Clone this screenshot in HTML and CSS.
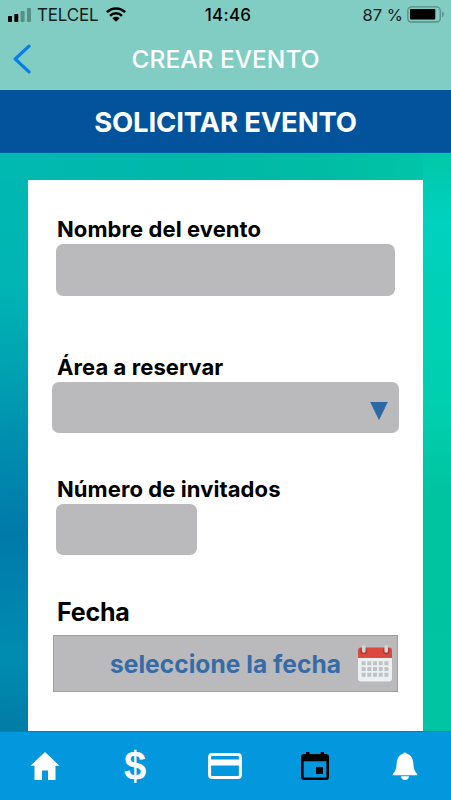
FILE: index.html
```html
<!DOCTYPE html>
<html lang="es">
<head>
<meta charset="utf-8">
<meta name="viewport" content="width=device-width, initial-scale=1">
<title>Crear evento</title>
<link rel="stylesheet" href="styles.css">
</head>
<body>
<div class="app">
  <header class="top">
    <div class="status">
      <div class="status-left">
        <svg class="signal" width="24" height="14" viewBox="0 0 24 14"><rect x="0" y="8" width="4" height="6" rx=".8"/><rect x="6.3" y="6" width="4" height="8" rx=".8"/><g fill="#559087"><rect x="12.6" y="3" width="4" height="11" rx=".8"/><rect x="19" y="0" width="4" height="14" rx=".8"/></g></svg>
        <span class="carrier">TELCEL</span>
        <svg class="wifi" width="20" height="15" viewBox="0 0 20 15"><g fill="none" stroke="#000" stroke-width="2.5"><path d="M.9 5.2a13 13 0 0 1 18.200 0"/><path d="M4 8.800a8.500 8.500 0 0 1 12 0"/></g><path d="M6.400 11.300a5.100 5.100 0 0 1 7.200 0L10 14.800z"/></svg>
      </div>
      <span class="clock">14:46</span>
      <div class="status-right">
        <span class="percent">87 %</span>
        <svg class="battery" width="38" height="17" viewBox="0 0 38 17"><rect x=".8" y=".8" width="32.4" height="15.2" rx="3.6" fill="none" stroke="#568f87" stroke-width="1.3"/><rect x="3" y="3" width="25.3" height="10.6" rx="1"/><path d="M35 5.600q1.800.8 1.800 2.800T35 11.200z" fill="#568f87"/></svg>
      </div>
    </div>
    <nav class="nav">
      <svg class="back" width="19" height="30" viewBox="0 0 19 30"><path d="M16 2.200 2.200 15 16 27.800" fill="none" stroke="#087de8" stroke-width="3.200" stroke-linecap="round" stroke-linejoin="round"/></svg>
      <h1 class="nav-title">CREAR EVENTO</h1>
    </nav>
  </header>
  <h2 class="banner">SOLICITAR EVENTO</h2>
  <main class="content">
    <form class="card">
      <label class="label label-name">Nombre del evento</label>
      <div class="field field-name"></div>
      <label class="label label-area">Área a reservar</label>
      <div class="field field-area"><svg width="18" height="18" viewBox="0 0 18 18"><path d="M.5 0h17L9 17.500z" fill="#2c68a5" stroke="#2c68a5" stroke-width=".6" stroke-linejoin="round"/></svg></div>
      <label class="label label-guests">Número de invitados</label>
      <div class="field field-guests"></div>
      <label class="label label-date">Fecha</label>
      <div class="date">
        <span class="date-text">seleccione la fecha</span>
        <svg class="calendar" width="36" height="37" viewBox="0 0 36 37"><rect x="1" y="4" width="34" height="32.500" rx="3" fill="#edf0f2"/><path d="M1 13V5.500q0-3 3-3h28q3 0 3 3V13z" fill="#dc493d"/><g fill="#b23c36"><circle cx="6.800" cy="6" r="3.500"/><circle cx="29.200" cy="6" r="3.500"/></g><path d="M6.800 1.800v4.200M29.200 1.800v4.200" stroke="#d3d2d4" stroke-width="3.600" stroke-linecap="round"/><g stroke="#bfc3c6" stroke-width="4" stroke-dasharray="4 1.700"><path d="M4.600 18.300h26.800M4.600 24h26.800M4.600 29.700h26.800"/></g></svg>
      </div>
    </form>
  </main>
  <footer class="tabs">
    <svg width="30" height="28" viewBox="0 0 30 28"><path d="M15 0 29.500 13.800H25.500V28H18V18.500H12V28H4.500V13.800H.5z" fill="#fff"/></svg>
    <span class="dollar">$</span>
    <svg width="34" height="26" viewBox="0 0 34 26"><rect x="1.600" y="1.600" width="30.800" height="22.800" rx="2.500" fill="none" stroke="#fff" stroke-width="3"/><path d="M1 6.500h32v6H1z" fill="#fff"/></svg>
    <svg width="28" height="28" viewBox="0 0 28 28"><path fill-rule="evenodd" d="M5 0h3.400v2h11.200V0H23v2h2q3 0 3 3v20q0 3-3 3H3q-3 0-3-3V5q0-3 3-3h2zM2.600 9.200V25.400H25.400V9.200zM15 15h7v7h-7z"/></svg>
    <svg width="26" height="28" viewBox="0 0 26 28"><path d="M11.200 1.700a1.900 1.900 0 0 1 3.600 0C19 3 21 6.500 21.300 11q.3 8 3.900 11v1.200H.8V22Q4.400 19 4.700 11C5 6.500 7 3 11.200 1.700zM9 24.200h8Q16.500 28 13 28T9 24.200z" fill="#fff"/></svg>
  </footer>
</div>
</body>
</html>
```
FILE: styles.css
```css
* { box-sizing: border-box; }
body { margin: 0; font-family: Inter, "Liberation Sans", sans-serif; color: #000; }
svg { display: block; flex: none; }
h1, h2 { margin: 0; }
.app { display: flex; flex-direction: column; width: 451px; height: 800px; overflow: hidden; white-space: nowrap; }
.top { flex: none; height: 90px; background: #82cdc3; }
.status { display: grid; grid-template-columns: 1fr auto 1fr; align-items: center; height: 29px; padding: 0 6px 0 8px; }
.status-left, .status-right { display: flex; align-items: center; }
.status-right { justify-content: flex-end; }
.carrier { margin: 0 8px 0 5px; font-size: 17px; letter-spacing: -0.2px; color: #15201f; }
.clock { margin-left: 3px; font-size: 17px; font-weight: 500; letter-spacing: 0.3px; }
.percent { margin-right: 4px; font-size: 16.500px; color: #15201f; }
.nav { display: grid; grid-template-columns: 1fr auto 1fr; align-items: center; height: 60px; padding: 0 13px; }
.nav-title { color: #fcffff; font-size: 24.500px; font-weight: 550; letter-spacing: 0; }
.banner { display: flex; flex: none; align-items: center; justify-content: center; height: 63px; padding-top: 1px; background: #02529c; border-bottom: 1px solid #0760a5; color: #fcffff; font-size: 27.500px; font-weight: 650; letter-spacing: -0.15px; }
.content {
  flex: none;
  height: 578px;
  padding: 27px 28px 0;
  background:
    linear-gradient(180deg, #00c7a8 0, #00d2c0 12%, #00d0b8 22%, #00d0b0 43%, #00c39f 60%, #00c4a3 100%) right top / 28px 100% no-repeat,
    linear-gradient(90deg, #00b9b1 0, #00b8a8 45%, #00bda5 75%, #00c7a8 100%) left top / 100% 27px no-repeat,
    linear-gradient(176deg, #00b9b1 0, #00b5b5 23%, #009eb1 40%, #008bae 52%, #007aaa 66%, #008cb1 87%, #007ca7 100%) left top / 28px 100% no-repeat;
}
.card { display: flex; flex-direction: column; align-items: flex-start; height: 551px; padding: 37px 0 0 24px; background: #fff; }
.label { height: 24px; margin-left: 5px; font-size: 22px; font-weight: 650; line-height: 24px; letter-spacing: 0.08px; }
.field { background: #bab9bb; border-radius: 7px; }
.field-name { width: 339px; height: 52px; margin: 3px 0 59px 4px; }
.field-area { display: flex; align-items: center; justify-content: flex-end; width: 347px; height: 51px; margin: 3px 0 43.500px; padding: 6px 11px 0 0; }
.field-guests { width: 141px; height: 51px; margin: 3px 0 44.500px 4px; }
.label-date { height: 26px; font-size: 25px; line-height: 26px; letter-spacing: -0.2px; }
.date { display: flex; align-items: center; justify-content: flex-end; width: 345px; height: 57px; margin: 10px 0 0 1px; padding-right: 4px; background: #bab9bb; border: 1px solid #a09fa1; }
.date-text { margin-right: 16px; color: #356ca8; font-size: 24.500px; font-weight: 650; letter-spacing: 0.05px; }
.tabs { display: grid; flex: none; grid-template-columns: repeat(5, 1fr); align-items: center; justify-items: center; height: 69px; padding-right: 1px; background: #0398dd; border-top: 1px solid #087eae; }
.dollar { color: #fff; font-family: "Liberation Sans", sans-serif; font-size: 40px; font-weight: 700; line-height: 40px; }
```
